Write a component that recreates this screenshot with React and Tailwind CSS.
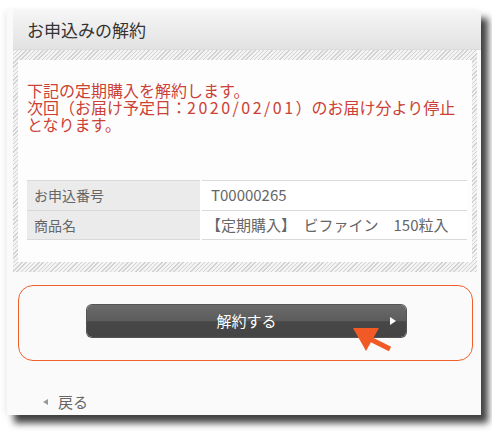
export default function App() {
  return (
    <div className="w-[492px] h-[442px] bg-white pt-[10px] pl-[7px] font-['Noto_Sans_CJK_JP',sans-serif] overflow-hidden">
      <div className="relative w-[474px] h-[405px] bg-[#fafafa] pl-[6px] shadow-[7px_8px_7px_rgba(0,0,0,0.75),-3px_0_6px_rgba(0,0,0,0.06)]">
        {/* Header */}
        <div className="h-[40px] w-[468px] flex items-center pl-[14px] bg-gradient-to-b from-[#f6f6f6] to-[#e2e2e2] border-b border-[#dcdcdc] text-[17px] text-[#333]">
          お申込みの解約
        </div>

        {/* Hatched frame */}
        <div className="w-[464px] h-[222px] pt-[10px] pb-[10px] pl-[5px] pr-[5px] bg-[repeating-linear-gradient(135deg,#d2d2d2_0_1px,#f3f3f3_1px_3px)]">
          <div className="h-full bg-[#fdfdfd] pl-[9px] pt-[22px]">
            <p className="text-[16px] leading-[17px] text-[#cc4136] whitespace-nowrap">
              下記の定期購入を解約します。
              <br />
              次回（お届け予定日：<span className="tracking-[2.5px]">2020/02/01</span>）のお届け分より停止
              <br />
              となります。
            </p>

            <table className="mt-[47px] w-[440px] border-collapse text-[14px] text-[#666]">
              <tbody>
                <tr className="h-[30px] border-t border-b border-[#d9d9d9]">
                  <td className="w-[174px] bg-[#ebebeb] pl-[7px] border-r-2 border-white">お申込番号</td>
                  <td className="pl-[9px] text-[15px] bg-white">T00000265</td>
                </tr>
                <tr className="h-[29px] border-b border-[#d9d9d9]">
                  <td className="w-[174px] bg-[#ebebeb] pl-[7px] border-r-2 border-white">商品名</td>
                  <td className="pl-[4px] text-[15px] bg-white whitespace-nowrap">【定期購入】　ビファイン　150粒入</td>
                </tr>
              </tbody>
            </table>
          </div>
        </div>

        {/* Submit box */}
        <div className="relative mt-[13px] ml-[5px] w-[455px] h-[76px] border border-[#f0602a] rounded-[15px] pt-[19px] pl-[68px]">
          <button className="relative w-[319px] h-[32px] rounded-[5px] bg-[linear-gradient(to_bottom,#6a6a6a_0%,#5c5c5c_50%,#474747_52%,#444_100%)] shadow-[0_0_0_1px_#555] text-white text-[15px] flex items-center justify-center">
            解約する
            <span className="absolute right-[10px] top-[12px] w-0 h-0 border-y-[4px] border-y-transparent border-l-[6px] border-l-white"></span>
          </button>
          <svg className="absolute left-[330px] top-[39px]" width="66" height="34" viewBox="0 0 66 34">
            <polygon points="4,3 30,3 17,26" fill="#f15a24" />
            <line x1="21" y1="14" x2="41" y2="24" stroke="#f15a24" strokeWidth="5" />
          </svg>
        </div>

        {/* Back link */}
        <div className="mt-[31px] pl-[30px] h-[20px] flex items-center text-[15px] text-[#666]">
          <span className="w-0 h-0 border-y-[3px] border-y-transparent border-r-[5px] border-r-[#999] mr-[10px]"></span>
          戻る
        </div>
      </div>
    </div>
  );
}
